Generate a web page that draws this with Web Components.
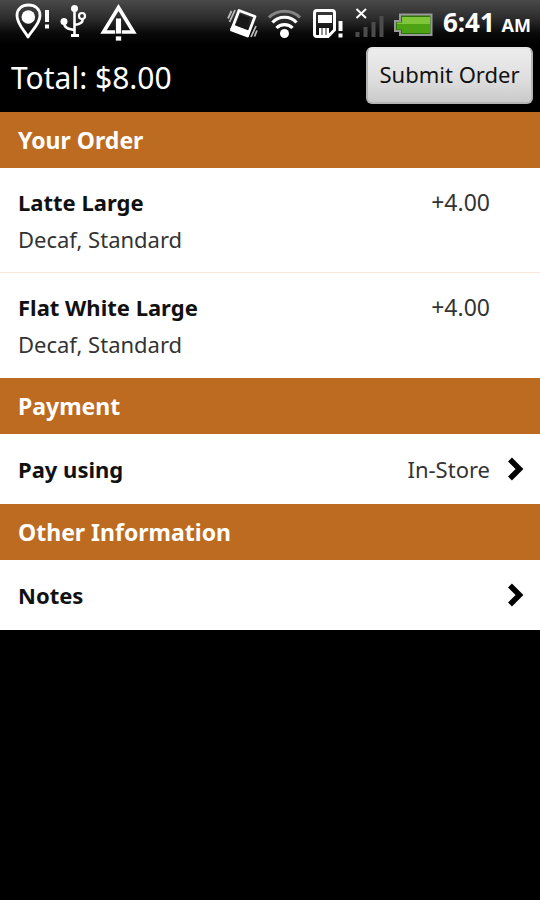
<!DOCTYPE html>
<html lang="en">
<head>
<meta charset="utf-8">
<meta name="viewport" content="width=device-width, initial-scale=1">
<title>Your Order</title>
<style>
body {
    margin: 0;
    background: #000;
    font-family: "Noto Sans", "Open Sans", sans-serif;
    color: #111;
}
</style>
</head>
<body>
<order-app></order-app>

<script>
function attach(host, html) {
  const template = document.createElement("template");
  template.innerHTML = html;
  host.attachShadow({ mode: "open" }).appendChild(template.content);
}

class StatusBar extends HTMLElement {
  connectedCallback() {
    attach(this, `
<style>
:host {
    display: flex;
    justify-content: space-between;
    align-items: flex-start;
    height: 44px;
    padding: 0 9px 0 12px;
    background: linear-gradient(#4a4a4a, #2e2e2e 40%, #0a0a0a 75%, #000);
}
.right {
    display: flex;
    align-items: center;
    gap: 10px;
}
svg {
    display: block;
}
.clock {
    color: #fff;
    font-size: 26px;
    font-weight: 700;
    line-height: 44px;
    white-space: nowrap;
}
.clock small {
    font-size: 18px;
}
</style>
<svg width="128" height="44" viewBox="12 0 128 44" fill="none" stroke="#fff" aria-hidden="true">
  <path d="M28 37C24 30 17 24 17 15.500C17 9 22 5 28.500 5S40 9 40 15.500C40 24 32 30 28 37Z" stroke-width="2.800" stroke-linejoin="round"/>
  <circle cx="28.300" cy="17" r="6.800" fill="#fff" stroke="none"/>
  <path d="M45 10h4v12h-4zM45 24.500h4v4h-4z" fill="#fff" stroke="none"/>
  <g stroke-width="2.600">
    <path d="M74.500 8V35M64 22C64 28 68 29 74.500 30M74.500 25C81 24 83 22 82.500 19"/>
    <circle cx="74.500" cy="8.500" r="3.500" fill="#fff" stroke="none"/>
    <circle cx="64" cy="21.500" r="3.500" fill="#fff" stroke="none"/>
    <circle cx="82" cy="16" r="3" stroke-width="2.200"/>
    <path d="M71 35.500h8" stroke-width="3"/>
  </g>
  <path d="M118.500 7.500L133.500 32H103.500Z" stroke-width="3.600"/>
  <path d="M115.500 18h6v16h-6zM115.500 36h6v5h-6z" fill="#fff" stroke="#111" stroke-width="0.800"/>
</svg>
<div class="right">
  <svg width="208" height="44" viewBox="225 0 208 44" fill="none" stroke="#fff" aria-hidden="true">
    <path d="M239 8.500L255 14.500L247.500 34L231.500 28Z" stroke-width="2.800" stroke-linejoin="round"/>
    <path d="M230 27L233 22.500L250 29L248.500 35Z" fill="#fff" stroke="none"/>
    <path d="M240 12L250 16L246 27L236 23.500Z" fill="#181818" stroke="none"/>
    <path d="M235 8L229.500 20M231.500 9L228 16.500M251 35L256 24M254.500 34.500L257 28.500" stroke="#bbb" stroke-width="1.800"/>
    <circle cx="284.500" cy="31.500" r="4.500" fill="#fff" stroke="none"/>
    <path d="M276.500 26C280.500 21.500 288.500 21.500 292.500 26M272.500 20.500C278.500 13.500 290.500 13.500 296.500 20.500" stroke-width="3.200"/>
    <path d="M269 15.500C277 7 292 7 300 15.500" stroke="#858585" stroke-width="3"/>
    <path d="M317 8.500H332Q334.500 8.500 334.500 11V28L328 34.500H317Q314.500 34.500 314.500 32V11Q314.500 8.500 317 8.500Z" stroke-width="3"/>
    <path d="M318 13h14v8h-14zM319 26h10v7h-10z" fill="#fff" stroke="none"/>
    <path d="M322 26v7M326 26v7" stroke="#222" stroke-width="1"/>
    <path d="M338.500 19h4v10h-4zM338.500 31.500h4v4h-4z" fill="#fff" stroke="none"/>
    <path d="M356.500 7L366 16M366 7L356.500 16" stroke-width="2"/>
    <path d="M355.500 30h4v5h-4zM363.500 25h4v10h-4zM371.500 20h4v15h-4zM379.500 14h4v21h-4z" fill="#4c4c4c" stroke="none"/>
    <path d="M400 12.500H431.500V33H400V29H395V19H400Z" fill="#2e7408" stroke="#999" stroke-width="2"/>
    <path d="M402 15H430V22H397V20.500H402Z" fill="#7fc63a" stroke="none"/>
    <path d="M397 22H430V31H402V27.500H397Z" fill="#4ea315" stroke="none"/>
  </svg>
  <div class="clock">6:41 <small>AM</small></div>
</div>
`);
  }
}

class OrderHeader extends HTMLElement {
  connectedCallback() {
    attach(this, `
<style>
:host {
    display: flex;
    justify-content: space-between;
    align-items: flex-start;
    padding: 3px 7px 3px 11px;
    background: #000;
}
h1 {
    margin: 0;
    color: #fff;
    font-size: 30px;
    font-weight: 400;
    line-height: 62px;
}
button {
    box-sizing: border-box;
    width: 167px;
    height: 57px;
    padding: 0 0 3px;
    border: 2px solid #b4b4b4;
    border-top-color: #e4e4e4;
    border-radius: 6px;
    background: linear-gradient(#ececec, #dfdfdf 55%, #cacaca);
    color: #111;
    font: 400 22px "Noto Sans", "Open Sans", sans-serif;
    white-space: nowrap;
}
</style>
<h1><slot></slot></h1>
<button type="button">Submit Order</button>
`);
  }
}

class OrderSection extends HTMLElement {
  connectedCallback() {
    attach(this, `
<style>
:host {
    display: block;
    background: #fff;
}
h2 {
    margin: 0;
    padding: 0 18px;
    background: #bd6b20;
    color: #fff;
    font-size: 23px;
    font-weight: 700;
    line-height: 56px;
}
::slotted(:not(:last-child)) {
    box-shadow: inset 0 -1px #fde6d8;
}
</style>
<h2>${this.getAttribute("heading")}</h2>
<slot></slot>
`);
  }
}

class OrderItem extends HTMLElement {
  connectedCallback() {
    attach(this, `
<style>
:host {
    display: flex;
    justify-content: space-between;
    padding: 16px 50px 15px 18px;
    font-size: 22px;
    line-height: 37px;
}
h3, p {
    margin: 0;
    font-size: 22px;
}
p, .price {
    color: #333;
}
.price {
    font-size: 23px;
}
</style>
<div>
  <h3><slot name="name"></slot></h3>
  <p><slot name="options"></slot></p>
</div>
<div class="price"><slot name="price"></slot></div>
`);
  }
}

class OrderLink extends HTMLElement {
  connectedCallback() {
    attach(this, `
<style>
:host {
    display: block;
}
button {
    display: flex;
    align-items: center;
    width: 100%;
    height: 70px;
    padding: 0 16px 0 18px;
    border: none;
    background: transparent;
    color: #111;
    font: 700 22px "Noto Sans", "Open Sans", sans-serif;
    text-align: left;
}
.label {
    flex: 1;
}
.value {
    color: #333;
    font-weight: 400;
}
svg {
    margin-left: 16px;
}
</style>
<button type="button">
  <span class="label"><slot></slot></span>
  <span class="value"><slot name="value"></slot></span>
  <svg width="18" height="24" viewBox="0 0 18 24" fill="none" stroke="#000" stroke-width="5.500" aria-hidden="true">
    <path d="M4 2.500L13.500 12L4 21.500"/>
  </svg>
</button>
`);
  }
}

class OrderApp extends HTMLElement {
  connectedCallback() {
    attach(this, `
<style>
:host {
    display: block;
}
</style>
<status-bar></status-bar>
<order-header>Total: $8.00</order-header>
<main>
  <order-section heading="Your Order">
    <order-item>
      <span slot="name">Latte Large</span>
      <span slot="options">Decaf, Standard</span>
      <span slot="price">+4.00</span>
    </order-item>
    <order-item>
      <span slot="name">Flat White Large</span>
      <span slot="options">Decaf, Standard</span>
      <span slot="price">+4.00</span>
    </order-item>
  </order-section>
  <order-section heading="Payment">
    <order-link>Pay using<span slot="value">In-Store</span></order-link>
  </order-section>
  <order-section heading="Other Information">
    <order-link>Notes</order-link>
  </order-section>
</main>
`);
  }
}

customElements.define("status-bar", StatusBar);
customElements.define("order-header", OrderHeader);
customElements.define("order-section", OrderSection);
customElements.define("order-item", OrderItem);
customElements.define("order-link", OrderLink);
customElements.define("order-app", OrderApp);
</script>
</body>
</html>
